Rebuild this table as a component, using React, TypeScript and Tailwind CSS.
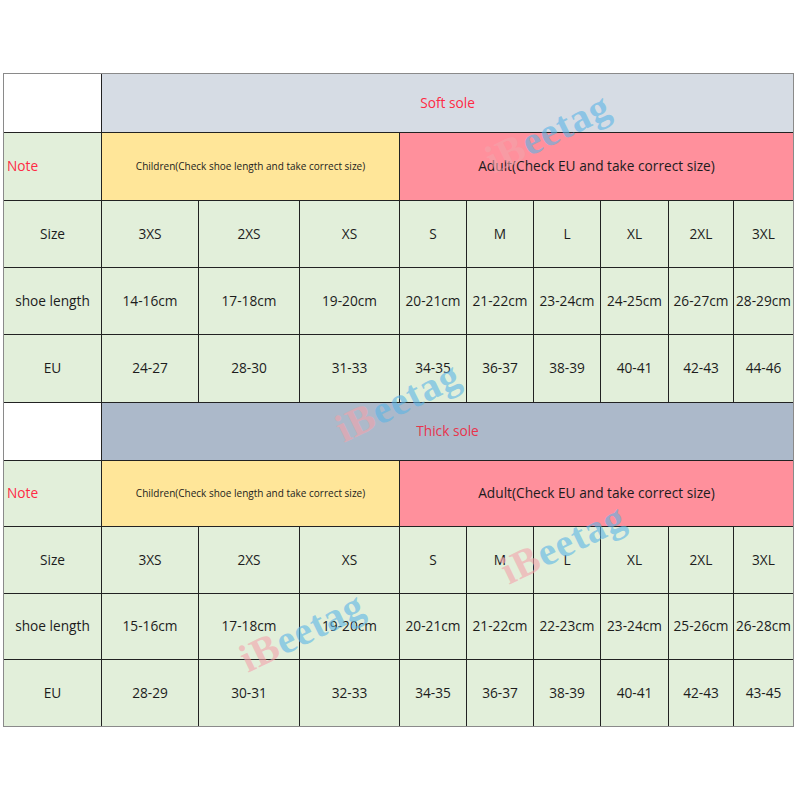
import React from "react";

const sizes = ["3XS", "2XS", "XS", "S", "M", "L", "XL", "2XL", "3XL"];

const blocks = [
  {
    title: "Soft sole",
    head: "bg-[#d6dce4]",
    titleColor: "text-[#ff2a45]",
    length: ["14-16cm", "17-18cm", "19-20cm", "20-21cm", "21-22cm", "23-24cm", "24-25cm", "26-27cm", "28-29cm"],
    eu: ["24-27", "28-30", "31-33", "34-35", "36-37", "38-39", "40-41", "42-43", "44-46"],
  },
  {
    title: "Thick sole",
    head: "bg-[#acb9ca]",
    titleColor: "text-[#e8344c]",
    length: ["15-16cm", "17-18cm", "19-20cm", "20-21cm", "21-22cm", "22-23cm", "23-24cm", "25-26cm", "26-28cm"],
    eu: ["28-29", "30-31", "32-33", "34-35", "36-37", "38-39", "40-41", "42-43", "43-45"],
  },
];

const cell = "flex items-center justify-center bg-[#e2efda] text-[13.7px] text-[#1c1c1c]";

function Block({ b }: { b: (typeof blocks)[number] }) {
  return (
    <>
      <div className="bg-white" />
      <div className={`col-span-9 flex items-center justify-center text-[13.7px] ${b.head} ${b.titleColor}`}>{b.title}</div>
      <div className="flex items-center bg-[#e2efda] pl-[3px] text-[13.7px] text-[#ff2a45]">Note</div>
      <div className="col-span-3 flex items-center justify-center bg-[#ffe699] text-[10px] text-[#1c1c1c]">
        Children(Check shoe length and take correct size)
      </div>
      <div className="col-span-6 flex items-center justify-center bg-[#ff909c] text-[13.7px] text-[#1c1c1c]">
        Adult(Check EU and take correct size)
      </div>
      <div className={cell}>Size</div>
      {sizes.map((s) => (
        <div key={s} className={cell}>{s}</div>
      ))}
      <div className={cell}>shoe length</div>
      {b.length.map((s, i) => (
        <div key={i} className={cell}>{s}</div>
      ))}
      <div className={cell}>EU</div>
      {b.eu.map((s, i) => (
        <div key={i} className={cell}>{s}</div>
      ))}
    </>
  );
}

function Mark({ pos }: { pos: string }) {
  return (
    <div
      className={`pointer-events-none absolute -translate-x-1/2 -translate-y-1/2 -rotate-[26deg] whitespace-nowrap text-[40px] font-bold leading-none tracking-[1px] ${pos}`}
      style={{ fontFamily: '"Liberation Serif", serif' }}
    >
      <span className="text-[#f3a3ab]/60">iB</span>
      <span className="text-[#5bb5e6]/60">eetag</span>
    </div>
  );
}

export default function App() {
  return (
    <div className="relative h-[800px] w-[800px] bg-white" style={{ fontFamily: '"Open Sans", "Noto Sans", sans-serif' }}>
      <div className="pl-[3px] pt-[73px]">
        <div className="grid w-[791px] grid-cols-[97px_96px_100px_99px_66px_66px_66px_67px_64px_59px] grid-rows-[58px_67px_66px_66px_67px_57px_65px_66px_65px_66px] gap-px border border-[#8a8a8a] bg-[#222]">
          {blocks.map((b) => (
            <Block key={b.title} b={b} />
          ))}
        </div>
      </div>
      <Mark pos="left-[548px] top-[133px]" />
      <Mark pos="left-[398px] top-[402px]" />
      <Mark pos="left-[563px] top-[544px]" />
      <Mark pos="left-[302px] top-[632px]" />
    </div>
  );
}
